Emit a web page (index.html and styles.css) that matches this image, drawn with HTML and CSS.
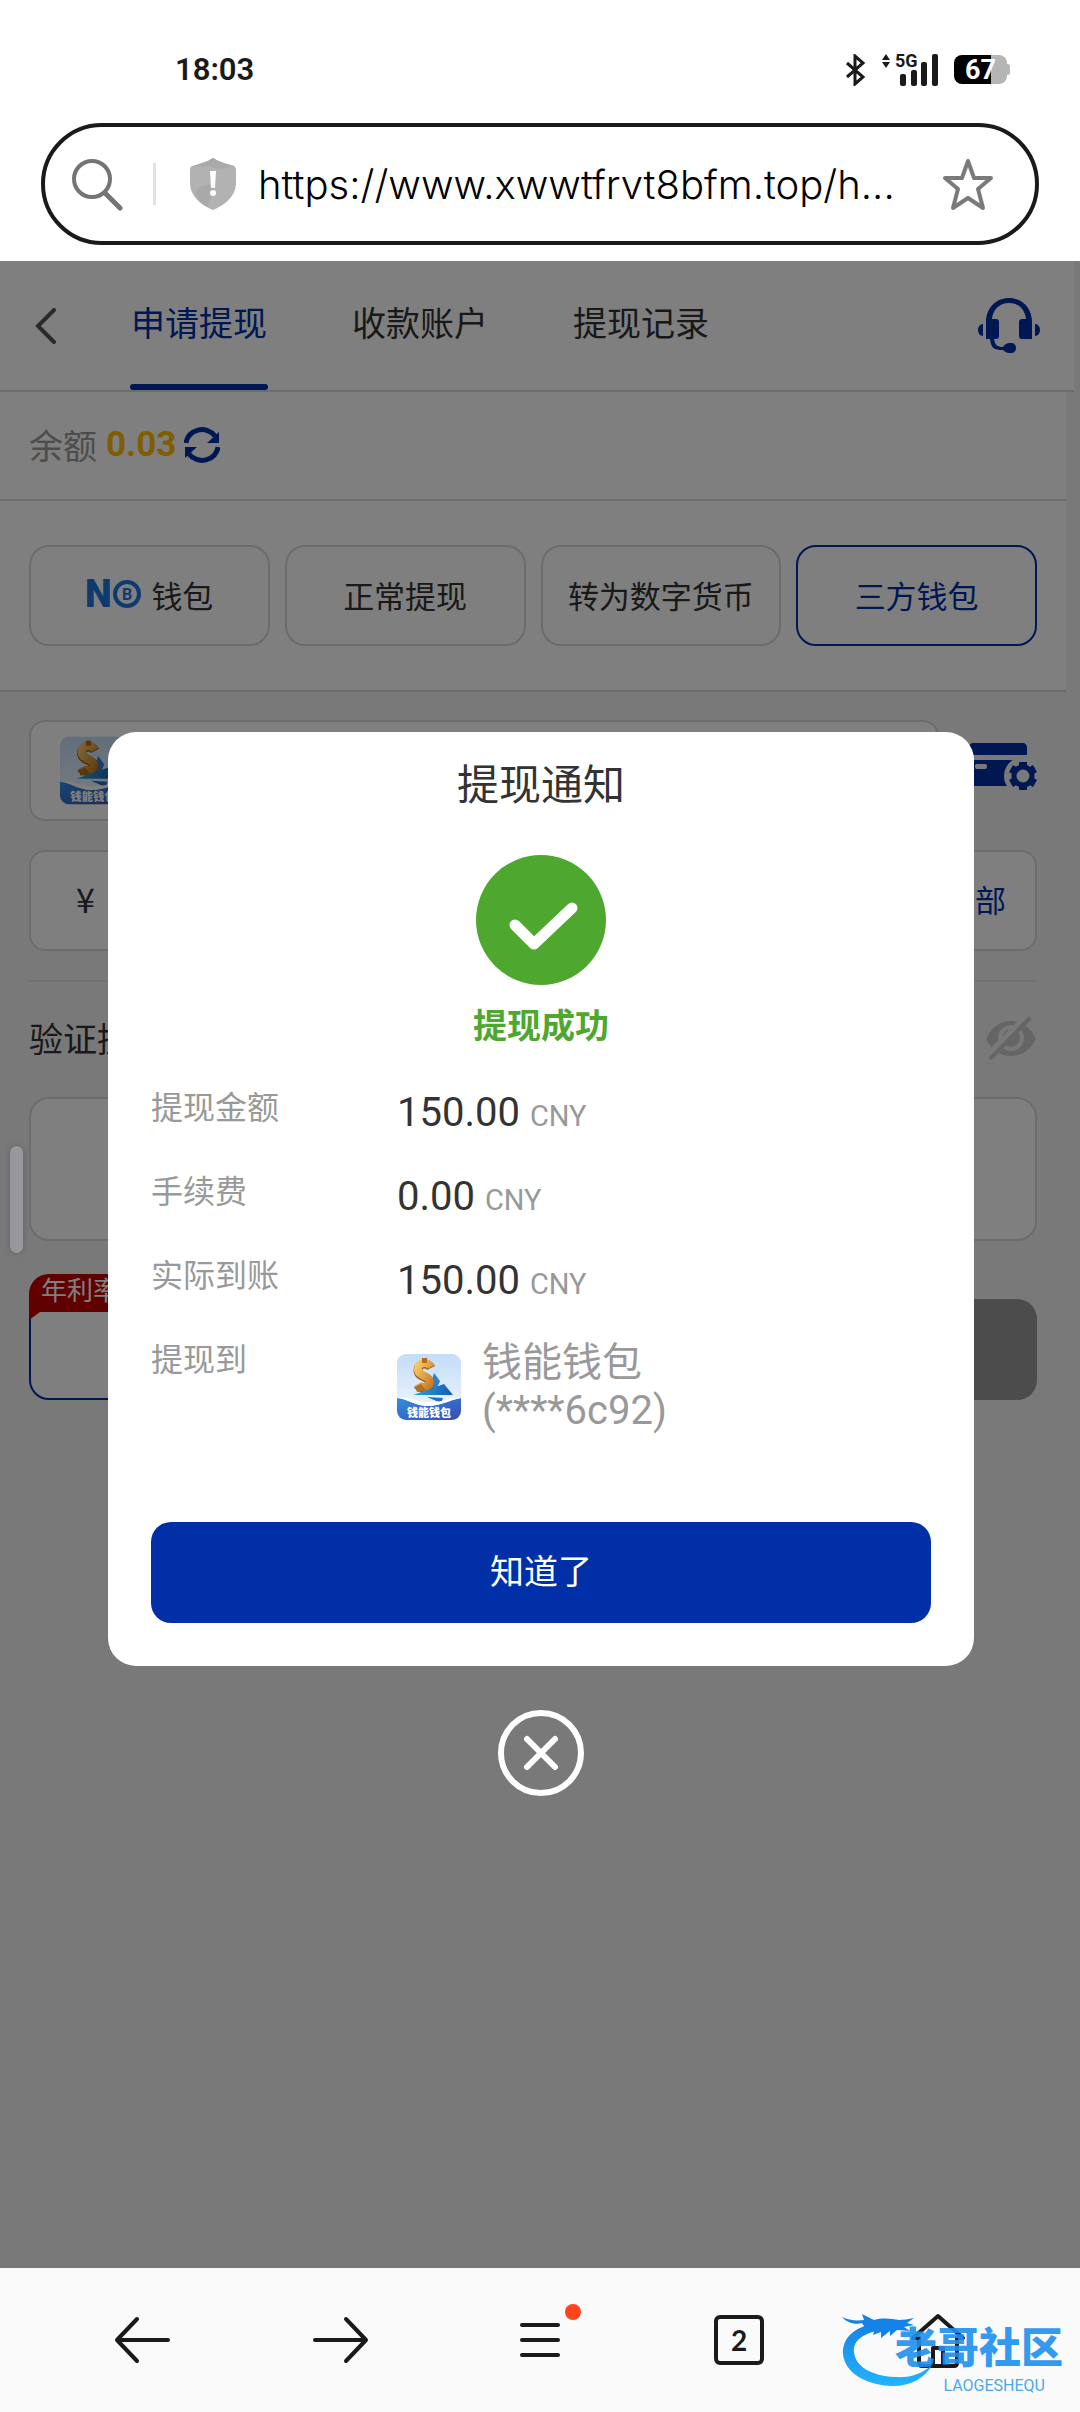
FILE: index.html
```html
<!DOCTYPE html>
<html lang="zh-CN">
<head>
  <meta charset="UTF-8">
  <meta name="viewport" content="width=device-width, initial-scale=1.0">
  <title>申请提现</title>
  <link rel="stylesheet" href="styles.css">
</head>

<body>

  <!-- 钱包图标 -->
  <svg width="0" height="0" class="defs" aria-hidden="true">
    <defs>
      <linearGradient id="sky" x1="0" y1="0" x2="0" y2="1">
        <stop offset="0" stop-color="#c3dcf8"/>
        <stop offset="1" stop-color="#f4faff"/>
      </linearGradient>
      <linearGradient id="sea" x1="0" y1="0" x2="1" y2="1">
        <stop offset="0" stop-color="#2f8fe0"/>
        <stop offset="1" stop-color="#3b4bb0"/>
      </linearGradient>
      <linearGradient id="gold" x1="0" y1="0" x2="1" y2="1">
        <stop offset="0" stop-color="#f8c766"/>
        <stop offset="1" stop-color="#c87a22"/>
      </linearGradient>
      <linearGradient id="boat" x1="0" y1="0" x2="1" y2="0">
        <stop offset="0" stop-color="#29a3dc"/>
        <stop offset="1" stop-color="#175bb0"/>
      </linearGradient>
      <clipPath id="round"><rect width="64" height="66" rx="9"/></clipPath>
      <symbol id="wallet" viewBox="0 0 64 66">
        <g clip-path="url(#round)">
          <rect width="64" height="66" fill="url(#sky)"/>
          <path d="M37 19l6 8-4 9-8 2z" fill="#2a7fd0"/>
          <path d="M34 14c-3-6-13-5-13 2 0 8 12 6 12 13 0 6-10 6-12 2" fill="none" stroke="#9b5a18" stroke-width="9"/>
          <path d="M34 13c-3-6-13-5-13 2 0 8 12 6 12 13 0 6-10 6-12 2" fill="none" stroke="url(#gold)" stroke-width="8"/>
          <path d="M25 4h5v5h-5zM18 33l6-3 5 6-9 2z" fill="#b56d1c"/>
          <path d="M16 41l31-11 9 11z" fill="url(#boat)"/>
          <path d="M30 43l16 1-2 5z" fill="#1e70bf"/>
          <path d="M0 44c11 1 16 7 30 8 14 0 22-6 34-8v22H0z" fill="url(#sea)"/>
          <path d="M0 44c14-2 20 6 38 4 10-1 18-5 26-4-12 2-20 8-34 8-14-1-19-7-30-8z" fill="#fff"/>
          <text x="32" y="63" text-anchor="middle" class="wallet-text">钱能钱包</text>
        </g>
      </symbol>
    </defs>
  </svg>

  <!-- 系统状态栏 -->
  <div class="status-bar">
    <span class="time">18:03</span>
    <div class="status-icons">
      <svg width="20" height="32" viewBox="0 0 20 32" fill="none" stroke="#1a1a1a" stroke-width="3">
        <path d="M1 9l16 14-8 7V2l8 7L1 23"/>
      </svg>
      <div class="signal">
        <svg width="58" height="34" viewBox="0 0 58 34" fill="#1a1a1a">
          <path d="M1 7l4-6 4 6zM1 9h8l-4 6z"/>
          <rect x="19" y="21" width="6" height="12" rx="2"/>
          <rect x="30" y="17" width="6" height="16" rx="2"/>
          <rect x="40" y="9" width="6" height="24" rx="2"/>
          <rect x="51" y="1" width="6" height="32" rx="2"/>
        </svg>
        <span class="net">5G</span>
      </div>
      <div class="battery">67</div>
    </div>
  </div>

  <!-- 地址栏 -->
  <div class="address-bar">
    <svg width="52" height="54" viewBox="0 0 52 54" fill="none" stroke="#747474" stroke-linecap="round">
      <circle cx="21" cy="22" r="18" stroke-width="4"/>
      <path d="M34 36l15 15" stroke-width="5"/>
    </svg>
    <span class="split"></span>
    <svg width="46" height="54" viewBox="0 0 46 54">
      <path d="M23 1c6 4 14 6 21 8 2 1 2 3 2 5v12c0 13-11 22-23 27C11 48 0 39 0 26V14c0-2 0-4 2-5C9 7 17 5 23 1z" fill="#b2b2b2"/>
      <path d="M23 1c6 4 14 6 21 8L29 12C20 8 12 10 3 9 9 7 17 5 23 1zM5 37c4-9 10-10 18-9 4 1-3 14-6 22C12 47 8 42 5 37z" fill="#a9a9a9"/>
      <path d="M20 14h6l-1 17h-4z" fill="#fff"/>
      <circle cx="23" cy="36" r="3" fill="#fff"/>
    </svg>
    <input class="url" type="text" aria-label="网址" value="https://www.xwwtfrvt8bfm.top/h..." readonly>
    <svg width="54" height="54" viewBox="0 0 54 54" fill="none" stroke="#7a7a7a" stroke-width="4" stroke-linejoin="round">
      <path d="M27 4l6 17h17L37 32l5 19-15-10-15 10 5-19L4 21h17z"/>
    </svg>
  </div>

  <!-- 网页内容 -->
  <main class="page">
    <header class="top-nav">
      <button class="back" aria-label="返回">
        <svg width="22" height="36" viewBox="0 0 22 36" fill="none" stroke="#555" stroke-width="4" stroke-linecap="round">
          <path d="M19 2L3 18l16 16"/>
        </svg>
      </button>
      <nav class="tabs">
        <a href="#" class="tab active">申请提现</a>
        <a href="#" class="tab">收款账户</a>
        <a href="#" class="tab">提现记录</a>
      </nav>
      <button class="service" aria-label="客服">
        <svg width="62" height="56" viewBox="0 0 62 56" fill="#002fa7">
          <path d="M8 24C8 10 18 0 31 0s23 10 23 24v17H44c-2 0-3-1-3-3V24c0-2 1-3 3-3h4C47 11 40 5 31 5S15 11 14 21h4c2 0 3 1 3 3v14c0 2-1 3-3 3h-2c1 6 3 8 9 8 2-3 4-4 6-4h2c3 0 5 2 5 5s-2 5-5 5h-2c-2 0-4-1-6-3-9 0-12-2-13-11H8z"/>
          <path d="M5 26v12c-3 0-5-3-5-6s2-6 5-6zM57 26v12c3 0 5-3 5-6s-2-6-5-6z"/>
        </svg>
      </button>
    </header>

    <section class="balance">
      <span>余额</span>
      <strong>0.03</strong>
      <button aria-label="刷新">
        <svg width="36" height="36" viewBox="0 0 36 36">
          <path d="M2 16a16 15 0 0 1 29-7M34 20a16 15 0 0 1-29 7" fill="none" stroke="#002fa7" stroke-width="5"/>
          <path d="M35 5v11H23zM1 31V20h12z" fill="#002fa7"/>
        </svg>
      </button>
    </section>

    <section class="methods">
      <button class="method">
        <svg class="no-logo" width="58" height="32" viewBox="0 0 58 32">
          <text x="0" y="29" class="no-text">N</text>
          <circle cx="42" cy="16" r="12" fill="none" stroke="#1c74e0" stroke-width="4"/>
          <text x="42" y="22" text-anchor="middle" class="coin-text">B</text>
        </svg>
        钱包
      </button>
      <button class="method">正常提现</button>
      <button class="method">转为数字货币</button>
      <button class="method selected">三方钱包</button>
    </section>

    <form class="form">
      <div class="wallet-row">
        <button type="button" class="field wallet-pick" aria-label="选择钱包">
          <svg width="66" height="69"><use href="#wallet"/></svg>
        </button>
        <button type="button" class="manage" aria-label="管理钱包">
          <svg width="70" height="58" viewBox="0 0 70 58">
            <path d="M2 13V6c0-3 2-5 5-5h48c3 0 5 2 5 5v7zM2 18h58v10L42 44H7c-3 0-5-2-5-5z" fill="#002fa7"/>
            <rect x="8" y="22" width="12" height="5" rx="2" fill="#f3f3f3"/>
            <circle cx="56" cy="34" r="19" fill="#f3f3f3"/>
            <path d="M2 13V6c0-3 2-5 5-5h48c3 0 5 2 5 5v7z" fill="#002fa7"/>
            <circle cx="56" cy="34" r="9" fill="none" stroke="#002fa7" stroke-width="5"/>
            <path d="M52 20h8v6h-8zM52 42h8v6h-8zM42 30l4-7 5 3-4 7zM61 42l4-7 5 3-4 7zM61 26l5-3 4 7-5 3zM42 38l5-3 4 7-5 3z" fill="#002fa7"/>
          </svg>
        </button>
      </div>

      <div class="field amount">
        <label for="amount">¥</label>
        <input type="text" id="amount">
        <button type="button">全部</button>
      </div>

      <hr>

      <div class="verify">
        <label for="password">验证提现密码</label>
        <svg width="52" height="44" viewBox="0 0 52 44">
          <path d="M1 23C7 10 16 5 26 5s19 5 25 18C45 35 36 40 26 40S7 35 1 23z" fill="#cacaca"/>
          <circle cx="26" cy="22" r="11" fill="none" stroke="#f3f3f3" stroke-width="4"/>
          <path d="M2 42L44 0" stroke="#f3f3f3" stroke-width="9"/>
          <path d="M5 43L45 2" stroke="#cacaca" stroke-width="4"/>
        </svg>
      </div>
      <input type="password" id="password" class="field password">

      <div class="actions">
        <button type="button" class="save">
          <span class="tag">年利率</span>
        </button>
        <button type="button" class="submit" aria-label="提现"></button>
      </div>
    </form>

    <!-- 提现通知弹窗 -->
    <div class="overlay">
      <div class="modal" role="dialog" aria-labelledby="modal-title">
        <h2 id="modal-title">提现通知</h2>
        <svg class="ok" width="130" height="130" viewBox="0 0 130 130">
          <circle cx="65" cy="65" r="65" fill="#4ea72e"/>
          <path d="M39 70l19 19 38-36" fill="none" stroke="#fff" stroke-width="11" stroke-linecap="round" stroke-linejoin="round"/>
        </svg>
        <p class="result">提现成功</p>

        <dl class="detail">
          <dt>提现金额</dt>
          <dd>150.00 <small>CNY</small></dd>
          <dt>手续费</dt>
          <dd>0.00 <small>CNY</small></dd>
          <dt>实际到账</dt>
          <dd>150.00 <small>CNY</small></dd>
          <dt>提现到</dt>
          <dd class="target">
            <svg width="64" height="66"><use href="#wallet"/></svg>
            <span>钱能钱包<br>(****6c92)</span>
          </dd>
        </dl>

        <button class="confirm">知道了</button>
      </div>

      <button class="close" aria-label="关闭">
        <svg width="88" height="88" viewBox="0 0 88 88" fill="none" stroke="#fff" stroke-width="6" stroke-linecap="round">
          <circle cx="44" cy="44" r="40"/>
          <path d="M30 30l28 28M58 30L30 58"/>
        </svg>
      </button>
    </div>

    <span class="edge-handle"></span>
  </main>

  <!-- 浏览器底栏 -->
  <nav class="bottom-bar">
    <button aria-label="后退">
      <svg width="56" height="48" viewBox="0 0 56 48"><path d="M54 24H3M23 3L3 24l20 21"/></svg>
    </button>
    <button aria-label="前进">
      <svg width="56" height="48" viewBox="0 0 56 48"><path d="M2 24h51M33 3l20 21-20 21"/></svg>
    </button>
    <button class="menu" aria-label="菜单">
      <svg width="42" height="48" viewBox="0 0 42 48"><path d="M3 9h36M3 24h36M3 39h36"/></svg>
      <span class="dot"></span>
    </button>
    <button aria-label="标签页"><span class="count">2</span></button>
    <button aria-label="主页">
      <svg width="56" height="56" viewBox="0 0 56 56"><path d="M9 26H3L28 4l25 22h-6v25q0 3-3 3H12q-3 0-3-3zM23 54V36h10v18"/></svg>
    </button>

    <!-- 水印 -->
    <div class="watermark">
      <svg width="92" height="76" viewBox="0 0 92 76">
        <defs>
          <linearGradient id="dragon" x1="0" y1="0" x2="0" y2="1">
            <stop offset="0" stop-color="#1482e6"/>
            <stop offset="1" stop-color="#22b4ff"/>
          </linearGradient>
        </defs>
        <path d="M38 11C14 13 0 25 1 42c2 20 24 31 50 32 18 0 32-8 39-21-10 9-22 13-37 12-24-1-40-11-41-25-1-11 8-18 26-22z" fill="url(#dragon)"/>
        <path d="M0 5c6 3 14 4 22 3l-2-6 12 6c10-3 18-1 25 0 5 0 9-1 15-2l-7 5 7 2-10 2 6 4-13-1-7 6v-5l-9 7v-6l-8 3 2-6c-7 0-11-2-13-6C13 13 5 11 0 5z" fill="#1482e6"/>
      </svg>
      <b>老哥社区</b>
      <i>LAOGESHEQU</i>
    </div>
  </nav>

</body>
</html>
```

FILE: styles.css
```css
* {
    box-sizing: border-box;
}

body {
    margin: 0;
    min-height: 100vh;
    display: flex;
    flex-direction: column;
    background: #fff;
    color: #333;
    font-family: Roboto, "Noto Sans CJK SC", sans-serif;
    font-size: 34px;
}

button, input {
    font: inherit;
    color: inherit;
    background: none;
    border: none;
    padding: 0;
    margin: 0;
    outline: none;
}

a {
    color: inherit;
    text-decoration: none;
}

svg {
    display: block;
    flex-shrink: 0;
}

.defs {
    position: absolute;
}

.wallet-text {
    font-size: 11px;
    font-weight: 900;
    fill: #fff;
}

/* 状态栏 */
.status-bar {
    height: 123px;
    padding: 16px 73px 0 175px;
    display: flex;
    align-items: center;
    justify-content: space-between;
    color: #1a1a1a;
}

.time {
    font-size: 31px;
    font-weight: 600;
}

.status-icons {
    display: flex;
    align-items: center;
    gap: 15px;
}

.signal {
    position: relative;
}

.net {
    position: absolute;
    left: 14px;
    top: -1px;
    font-size: 18px;
    line-height: 18px;
    font-weight: 700;
}

.battery {
    position: relative;
    width: 53px;
    height: 29px;
    border-radius: 8px;
    background: linear-gradient(90deg, #000 70%, #b5b5b5 70%);
    color: #fff;
    font-size: 27px;
    font-weight: 700;
    line-height: 30px;
    text-align: center;
}

.battery::after {
    content: "";
    position: absolute;
    right: -3px;
    top: 9px;
    width: 5px;
    height: 11px;
    border-radius: 3px;
    background: #b5b5b5;
}

/* 地址栏 */
.address-bar {
    height: 122px;
    margin: 0 41px 16px;
    padding: 0 40px 0 26px;
    border: 4px solid #1a1a1a;
    border-radius: 61px;
    display: flex;
    align-items: center;
}

.split {
    width: 3px;
    height: 42px;
    margin: 0 34px 0 30px;
    background: #e2e2e2;
}

.url {
    flex: 1;
    min-width: 0;
    margin-left: 22px;
    color: #000;
    font-family: Inter, sans-serif;
    font-size: 40px;
    font-weight: 300;
}

/* 页面 */
.page {
    position: relative;
    flex: 1;
    background: #f3f3f3;
}

.top-nav {
    height: 131px;
    margin-right: 6px;
    padding: 0 34px 0 35px;
    display: flex;
    align-items: center;
    background: #fff;
    border-bottom: 2px solid #d8d8d8;
}

.tabs {
    flex: 1;
    display: flex;
    gap: 83px;
    margin-left: 73px;
    align-self: stretch;
}

.tab {
    position: relative;
    min-width: 138px;
    line-height: 126px;
    text-align: center;
}

.tab.active {
    color: #002fa7;
}

.tab.active::after {
    content: "";
    position: absolute;
    left: 0;
    right: 0;
    bottom: 0;
    height: 6px;
    border-radius: 3px;
    background: #002fa7;
}

.balance {
    height: 109px;
    margin-right: 14px;
    padding-left: 29px;
    padding-bottom: 2px;
    display: flex;
    align-items: center;
    background: #fff;
    border-bottom: 2px solid #d8d8d8;
    color: #999;
}

.balance strong {
    margin: 0 8px 0 9px;
    color: #ffbc00;
    font-size: 35px;
}

.methods {
    margin-right: 14px;
    padding: 44px 29px;
    display: grid;
    grid-template-columns: repeat(4, 1fr);
    gap: 15px;
    background: #fff;
    border-bottom: 2px solid #d8d8d8;
}

.method {
    height: 101px;
    padding-bottom: 3px;
    border: 2px solid #d8d8d8;
    border-radius: 20px;
    display: flex;
    align-items: center;
    justify-content: center;
    gap: 8px;
    font-size: 31px;
    white-space: nowrap;
}

.method.selected {
    border-color: #002fa7;
    color: #002fa7;
}

.no-logo {
    overflow: visible;
}

.no-text {
    font-size: 38px;
    font-weight: 900;
    fill: #1c74e0;
}

.coin-text {
    font-size: 16px;
    font-weight: 700;
    fill: #1c74e0;
}

/* 表单 */
.form {
    margin-right: 14px;
    padding: 28px 29px;
}

.field {
    height: 101px;
    background: #fff;
    border: 2px solid #d8d8d8;
    border-radius: 16px;
}

.wallet-row {
    display: flex;
    align-items: center;
    justify-content: space-between;
    gap: 28px;
}

.wallet-pick {
    flex: 1;
    padding-left: 29px;
}

.amount {
    margin-top: 29px;
    padding: 0 29px 4px 45px;
    display: flex;
    align-items: center;
    font-size: 31px;
}

.amount input {
    flex: 1;
    min-width: 0;
}

.amount button {
    color: #002fa7;
}

.amount label {
    font-family: "Noto Sans CJK SC", sans-serif;
    font-size: 34px;
}

.form hr {
    margin: 29px 0 30px;
    border: none;
    border-top: 2px solid #e4e4e4;
}

.verify {
    height: 51px;
    display: flex;
    align-items: center;
    justify-content: space-between;
}

.password {
    display: block;
    width: 100%;
    height: 144px;
    margin-top: 34px;
    border-radius: 20px;
}

.actions {
    margin-top: 58px;
    display: flex;
    gap: 15px;
}

.actions button {
    flex: 1;
    height: 101px;
    border-radius: 20px;
}

.save {
    position: relative;
    background: #fff;
    border: 2px solid #002fa7;
}

/* 红色角标盖在按钮左上角 */
.tag {
    position: absolute;
    left: -2px;
    top: -27px;
    height: 46px;
    padding: 0 12px;
    border-radius: 20px 20px 0 0;
    background: #c00000;
    clip-path: polygon(0 0, 100% 0, 100% 38px, 11px 38px, 0 46px);
    color: #fff;
    font-size: 26px;
    line-height: 34px;
}

.submit {
    background: #999;
}

/* 弹窗 */
.overlay {
    position: absolute;
    inset: 0;
    padding: 0 106px 0 108px;
    display: flex;
    flex-direction: column;
    align-items: center;
    justify-content: center;
    gap: 43px;
    background: rgba(0, 0, 0, 0.5);
}

.modal {
    width: 100%;
    padding: 29px 43px 43px;
    border-radius: 28px;
    background: #fff;
}

.modal h2 {
    margin: 0;
    font-size: 42px;
    font-weight: 400;
    line-height: 50px;
    text-align: center;
}

.ok {
    margin: 44px auto 16px;
}

.result {
    margin: 0;
    color: #4ea72e;
    font-weight: 700;
    line-height: 50px;
    text-align: center;
}

.detail {
    margin: 29px 0 87px;
    display: grid;
    grid-template-columns: 246px 1fr;
    row-gap: 18px;
}

.detail dt {
    color: #999;
    font-size: 32px;
    line-height: 56px;
}

.detail dd {
    margin: 0;
    font-size: 40px;
    line-height: 66px;
}

.detail small {
    color: #999;
    font-size: 29px;
    line-height: 29px;
}

.detail .target {
    display: flex;
    align-items: center;
    gap: 21px;
    padding-top: 7px;
    color: #999;
    line-height: 48px;
}

.confirm {
    display: block;
    width: 100%;
    height: 101px;
    padding-bottom: 6px;
    border-radius: 20px;
    background: #002fa7;
    color: #fff;
}

.edge-handle {
    position: absolute;
    left: 10px;
    top: 885px;
    width: 13px;
    height: 107px;
    border-radius: 7px;
    background: #98989c;
    box-shadow: 0 0 6px rgba(0, 0, 0, 0.2);
}

/* 底栏 */
.bottom-bar {
    position: relative;
    height: 144px;
    padding: 0 42px;
    display: grid;
    grid-template-columns: repeat(5, 1fr);
    align-items: center;
    justify-items: center;
    background: #fafafa;
}

.bottom-bar button svg {
    fill: none;
    stroke: #1a1a1a;
    stroke-width: 4;
    stroke-linecap: round;
    stroke-linejoin: round;
}

.menu {
    position: relative;
}

.dot {
    position: absolute;
    right: -20px;
    top: -12px;
    width: 16px;
    height: 16px;
    border-radius: 50%;
    background: #ff431a;
}

.count {
    display: block;
    width: 50px;
    height: 50px;
    border: 4px solid #1a1a1a;
    border-radius: 6px;
    color: #1a1a1a;
    font-family: Lato, sans-serif;
    font-size: 28px;
    font-weight: 700;
    line-height: 42px;
    text-align: center;
}

.watermark {
    position: absolute;
    right: 17px;
    bottom: 24px;
    width: 221px;
    height: 76px;
}

.watermark b {
    position: absolute;
    right: 0;
    top: 16px;
    color: #1e90ee;
    font-size: 42px;
    font-weight: 900;
    line-height: 42px;
    opacity: 0.9;
}

.watermark i {
    position: absolute;
    right: 18px;
    bottom: -6px;
    color: #4aa8ee;
    font-size: 16px;
    font-style: normal;
    line-height: 16px;
}
```
